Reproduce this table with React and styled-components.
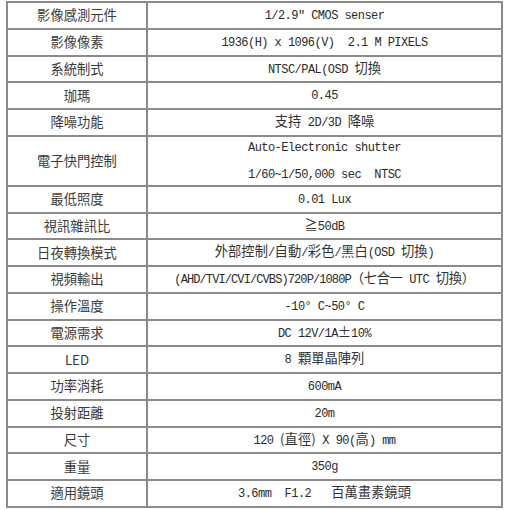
import React from "react";
import styled, { createGlobalStyle } from "styled-components";

const Global = createGlobalStyle`
  html, body { margin: 0; padding: 0; background: #ffffff; }
  body { font-family: "Noto Sans CJK TC", "Noto Sans", sans-serif; }
`;

const Page = styled.div`
  padding: 1px 0 0 6px;
  width: 510px;
  height: 510px;
  box-sizing: border-box;
  background: #fff;
`;

const Sheet = styled.div`
  display: grid;
  grid-template-columns: 138px 353px;
  grid-template-rows: repeat(5, 24.75px) 48px repeat(12, 24.75px);
  gap: 2px;
  padding: 2px;
  width: max-content;
  background: #8b8b8b;
`;

const Cell = styled.div`
  background: #ffffff;
  display: flex;
  flex-direction: column;
  align-items: center;
  justify-content: center;
  color: #333;
  overflow: hidden;
`;

const LabelCell = styled(Cell)`
  font-family: "Noto Sans CJK TC", "Noto Sans", sans-serif;
  font-size: 13.3px;
  line-height: 20px;
  color: #3a3a3a;
`;

const ValueCell = styled(Cell)`
  font-family: "Noto Sans CJK TC", "Noto Sans", sans-serif;
  font-size: 13.3px;
`;

const Line = styled.div`
  white-space: pre;
  line-height: 23.5px;
  letter-spacing: ${(p) => (p.$tight ? "-0.35px" : "0")};
`;

const Lat = styled.span`
  font-family: "Liberation Mono", "DejaVu Sans Mono", monospace;
  font-size: 12px;
  letter-spacing: ${(p) => (p.$tight ? "-0.9px" : "-0.55px")};
  color: #2b2b2b;
`;

const rows = [
  ["影像感測元件", [<Lat>1/2.9" CMOS senser</Lat>]],
  ["影像像素", [<Lat>1936(H) x 1096(V)  2.1 M PIXELS</Lat>]],
  ["系統制式", [<><Lat>NTSC/PAL(OSD </Lat>切換</>]],
  ["珈瑪", [<Lat>0.45</Lat>]],
  ["降噪功能", [<>支持<Lat> 2D/3D </Lat>降噪</>]],
  [
    "電子快門控制",
    [
      <Lat>Auto-Electronic shutter</Lat>,
      <Lat>1/60~1/50,000 sec  NTSC</Lat>,
    ],
  ],
  ["最低照度", [<Lat>0.01 Lux</Lat>]],
  ["視訊雜訊比", [<>≧<Lat>50dB</Lat></>]],
  ["日夜轉換模式", [<>外部控制<Lat>/</Lat>自動<Lat>/</Lat>彩色<Lat>/</Lat>黑白<Lat>(OSD </Lat>切換<Lat>)</Lat></>]],
  ["視頻輸出", [<><Lat $tight>(AHD/TVI/CVI/CVBS)720P/1080P</Lat>（七合一<Lat> UTC </Lat>切換）</>], true],
  ["操作溫度", [<Lat>-10° C~50° C</Lat>]],
  ["電源需求", [<><Lat>DC 12V/1A</Lat>±<Lat>10%</Lat></>]],
  ["LED", [<><Lat>8 </Lat>顆單晶陣列</>]],
  ["功率消耗", [<Lat>600mA</Lat>]],
  ["投射距離", [<Lat>20m</Lat>]],
  ["尺寸", [<><Lat>120 </Lat>(直徑)<Lat> X 90(</Lat>高<Lat>) mm</Lat></>]],
  ["重量", [<Lat>350g</Lat>]],
  ["適用鏡頭", [<><Lat>3.6mm  F1.2   </Lat>百萬畫素鏡頭</>]],
];

export default function App() {
  return (
    <>
      <Global />
      <Page>
        <Sheet>
          {rows.map(([label, lines, tight], i) => (
            <React.Fragment key={i}>
              <LabelCell>{label}</LabelCell>
              <ValueCell>
                {lines.map((l, j) => (
                  <Line key={j} $tight={tight}>
                    {l}
                  </Line>
                ))}
              </ValueCell>
            </React.Fragment>
          ))}
        </Sheet>
      </Page>
    </>
  );
}
